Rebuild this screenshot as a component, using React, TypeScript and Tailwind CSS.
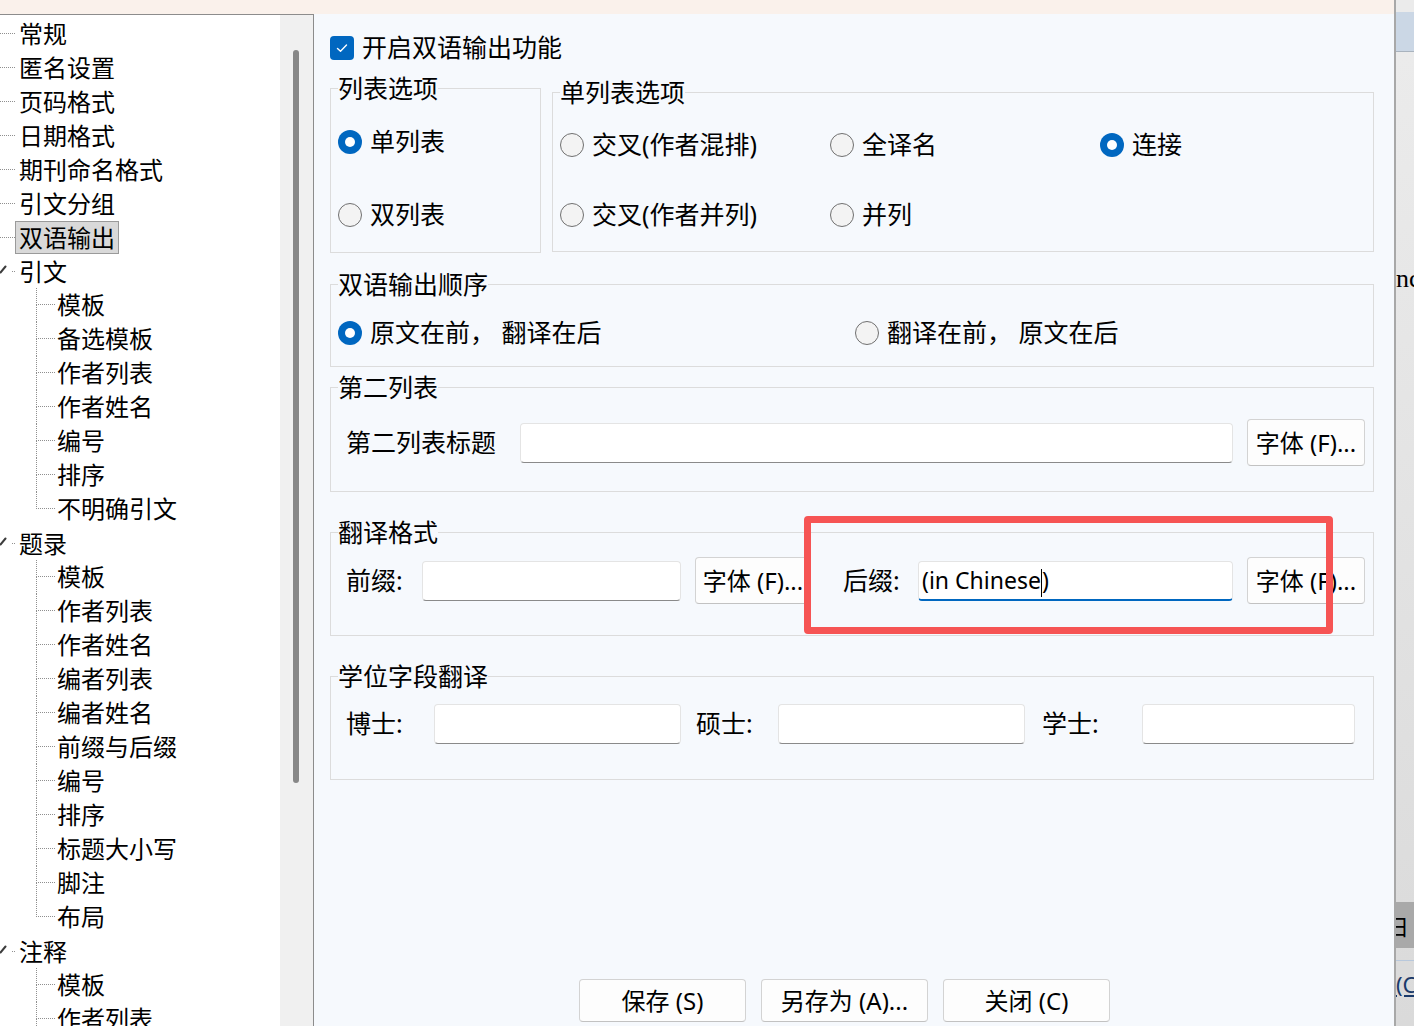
import React from 'react';

type TreeNode = { label: string; selected?: boolean; children?: string[] };

const tree: TreeNode[] = [
  { label: '常规' },
  { label: '匿名设置' },
  { label: '页码格式' },
  { label: '日期格式' },
  { label: '期刊命名格式' },
  { label: '引文分组' },
  { label: '双语输出', selected: true },
  { label: '引文', children: ['模板', '备选模板', '作者列表', '作者姓名', '编号', '排序', '不明确引文'] },
  {
    label: '题录',
    children: ['模板', '作者列表', '作者姓名', '编者列表', '编者姓名', '前缀与后缀', '编号', '排序', '标题大小写', '脚注', '布局'],
  },
  { label: '注释', children: ['模板', '作者列表'] },
];

function TopRow({ node }: { node: TreeNode }) {
  return (
    <div className="flex h-[34px] items-center">
      <div className="flex w-[15px] items-center">
        {node.children ? (
          <>
            <svg width="8" height="34" viewBox="0 0 8 34" className="shrink-0">
              <path d="M0.5 18.5 L5.5 12.5" stroke="#3c3c3c" strokeWidth="2" strokeLinecap="round" fill="none" />
            </svg>
            <div className="ml-auto w-[3px] border-t border-dotted border-[#8f8f8f]" />
          </>
        ) : (
          <div className="w-full border-t border-dotted border-[#8f8f8f]" />
        )}
      </div>
      <span
        className={
          node.selected
            ? 'border border-[#9a9a9a] bg-[#d9d9d9] px-[3px] leading-[31px]'
            : 'border border-transparent px-[3px] leading-[31px]'
        }
      >
        {node.label}
      </span>
    </div>
  );
}

function ChildRow({ label, last }: { label: string; last: boolean }) {
  return (
    <div className="flex h-[34px]">
      <div className="w-[36px]" />
      <div className="flex w-[19px] flex-col">
        <div className="h-[17px] border-b border-l border-dotted border-[#8f8f8f]" />
        <div className={last ? 'flex-1' : 'flex-1 border-l border-dotted border-[#8f8f8f]'} />
      </div>
      <span className="flex items-center pl-[2px]">{label}</span>
    </div>
  );
}

function Radio({ label, checked = false }: { label: string; checked?: boolean }) {
  return (
    <div className="flex h-[34px] items-center gap-[8px] whitespace-nowrap">
      {checked ? (
        <span className="flex h-[24px] w-[24px] shrink-0 items-center justify-center rounded-full bg-[#0067c0]">
          <span className="h-[10px] w-[10px] rounded-full bg-white" />
        </span>
      ) : (
        <span className="h-[24px] w-[24px] shrink-0 rounded-full border border-[#707070] bg-[#f3f3f3]" />
      )}
      <span>{label}</span>
    </div>
  );
}

function Group({ title, className, children }: { title: string; className?: string; children: React.ReactNode }) {
  return (
    <fieldset className={'min-w-0 border border-[#dcdcdc] px-[7px] ' + (className ?? '')}>
      <legend className="leading-[30px]">{title}</legend>
      {children}
    </fieldset>
  );
}

function TextBox({ className, children }: { className?: string; children?: React.ReactNode }) {
  return (
    <div
      className={
        'flex h-[40px] items-center rounded-[4px] border border-[#e4e4e4] border-b-[#8a8a8a] bg-white ' + (className ?? '')
      }
    >
      {children}
    </div>
  );
}

function Btn({ className, children }: { className?: string; children: React.ReactNode }) {
  return (
    <button
      className={
        'flex shrink-0 items-center justify-center whitespace-nowrap rounded-[4px] border border-[#d3d3d3] border-b-[#c2c2c2] bg-[#fdfdfd] text-[24px] ' +
        (className ?? '')
      }
    >
      {children}
    </button>
  );
}

export default function App() {
  return (
    <div className="relative flex h-[1026px] w-[1414px] overflow-hidden font-['Noto_Sans','Noto_Sans_CJK_SC',sans-serif] text-black">
      {/* dialog */}
      <div className="flex w-[1394px] flex-col">
        <div className="h-[14px] shrink-0 bg-[#faf1eb]" />
        <div className="flex min-h-0 flex-1">
          {/* tree */}
          <div className="flex w-[314px] shrink-0 overflow-hidden border-r border-t border-[#8c8c8c] bg-white">
            <div className="flex-1 overflow-hidden pt-[1px] text-[24px]">
              {tree.map((node) => (
                <div key={node.label}>
                  <TopRow node={node} />
                  {node.children?.map((c, i) => (
                    <ChildRow key={node.label + c} label={c} last={i === node.children!.length - 1 && node.label !== '注释'} />
                  ))}
                </div>
              ))}
            </div>
            <div className="w-[33px] shrink-0 bg-[#f0f0f0] pl-[13px] pt-[35px]">
              <div className="h-[733px] w-[6px] rounded-full bg-[#878787]" />
            </div>
          </div>

          {/* settings */}
          <div className="flex min-w-0 flex-1 flex-col bg-[#f6f9fd] pl-[16px] pr-[20px] pt-[17px] text-[25px]">
            <div className="flex h-[34px] items-center gap-[8px]">
              <span className="flex h-[24px] w-[24px] items-center justify-center rounded-[4px] bg-[#0067c0]">
                <svg width="14" height="14" viewBox="0 0 14 14">
                  <path d="M2.5 7.5 L5.5 10.2 L11.5 4" stroke="white" strokeWidth="1.4" fill="none" strokeLinecap="round" strokeLinejoin="round" />
                </svg>
              </span>
              <span>开启双语输出功能</span>
            </div>

            <div className="mt-[8px] flex items-start gap-[11px]">
              <Group title="列表选项" className="w-[211px] shrink-0">
                <div className="flex flex-col gap-[39px] pb-[20px] pt-[22px]">
                  <Radio label="单列表" checked />
                  <Radio label="双列表" />
                </div>
              </Group>
              <Group title="单列表选项" className="mt-[4px] flex-1">
                <div className="grid grid-cols-[270px_270px_1fr] gap-y-[36px] pb-[19px] pt-[21px]">
                  <Radio label="交叉(作者混排)" />
                  <Radio label="全译名" />
                  <Radio label="连接" checked />
                  <Radio label="交叉(作者并列)" />
                  <Radio label="并列" />
                </div>
              </Group>
            </div>

            <Group title="双语输出顺序" className="mt-[16px]">
              <div className="grid grid-cols-[517px_1fr] pb-[16px] pt-[17px]">
                <Radio label="原文在前， 翻译在后" checked />
                <Radio label="翻译在前， 原文在后" />
              </div>
            </Group>

            <Group title="第二列表" className="mt-[5px]">
              <div className="flex items-center pb-[25px] pl-[8px] pr-[1px] pt-[17px]">
                <span className="w-[174px] shrink-0">第二列表标题</span>
                <TextBox className="flex-1" />
                <Btn className="ml-[14px] h-[47px] w-[118px]">字体 (F)...</Btn>
              </div>
            </Group>

            <Group title="翻译格式" className="mt-[25px]">
              <div className="flex items-center pb-[31px] pl-[8px] pr-[1px] pt-[10px]">
                <span className="w-[76px] shrink-0">前缀:</span>
                <TextBox className="w-[259px] shrink-0" />
                <Btn className="ml-[14px] h-[47px] w-[116px]">字体 (F)...</Btn>
                <span className="ml-[32px] w-[75px] shrink-0">后缀:</span>
                <TextBox className="flex-1 border-b-2 border-b-[#0067c0] pl-[3px] text-[23px]">
                  <span className="whitespace-nowrap">
                    (in Chinese
                    <span className="inline-block h-[28px] w-px bg-black align-middle" />)
                  </span>
                </TextBox>
                <Btn className="ml-[14px] h-[47px] w-[118px]">字体 (F)...</Btn>
              </div>
            </Group>

            <Group title="学位字段翻译" className="mt-[25px]">
              <div className="flex items-center pb-[35px] pl-[8px] pt-[13px]">
                <span className="w-[88px] shrink-0">博士:</span>
                <TextBox className="w-[247px] shrink-0" />
                <span className="ml-[15px] w-[82px] shrink-0">硕士:</span>
                <TextBox className="w-[247px] shrink-0" />
                <span className="ml-[17px] w-[100px] shrink-0">学士:</span>
                <TextBox className="w-[213px] shrink-0" />
              </div>
            </Group>

            <div className="mt-auto flex gap-[15px] pb-[4px] pl-[249px]">
              <Btn className="h-[43px] w-[167px]">保存 (S)</Btn>
              <Btn className="h-[43px] w-[167px]">另存为 (A)...</Btn>
              <Btn className="h-[43px] w-[167px]">关闭 (C)</Btn>
            </div>
          </div>
        </div>
      </div>

      {/* window behind, on the right */}
      <div className="flex w-[20px] shrink-0 flex-col overflow-hidden border-l-2 border-[#a8a8a8] bg-gradient-to-b from-[#ececec] to-[#dadada] font-['Liberation_Serif',serif]">
        <div className="h-[12px] shrink-0 bg-[#ebebeb]" />
        <div className="h-[40px] shrink-0 border-b border-[#a9b3be] bg-[#cbd7e5]" />
        <div className="mt-[212px] whitespace-nowrap text-[26px] leading-[30px]">nc</div>
        <div className="mt-[608px] flex h-[46px] items-center whitespace-nowrap bg-[#a9a9a9] font-['Noto_Sans_CJK_SC',sans-serif] text-[22px] -indent-[9px]">
          日
        </div>
        <div className="mt-[12px] h-px bg-[#b8c8dc]" />
        <div className="whitespace-nowrap pt-[8px] font-['Noto_Sans',sans-serif] text-[22px] leading-[30px] text-[#1a3a6a] underline">(C</div>
      </div>

      {/* red annotation */}
      <div className="pointer-events-none absolute left-[804px] top-[516px] h-[118px] w-[529px] rounded-[4px] border-[7px] border-[#f65454]" />
    </div>
  );
}
